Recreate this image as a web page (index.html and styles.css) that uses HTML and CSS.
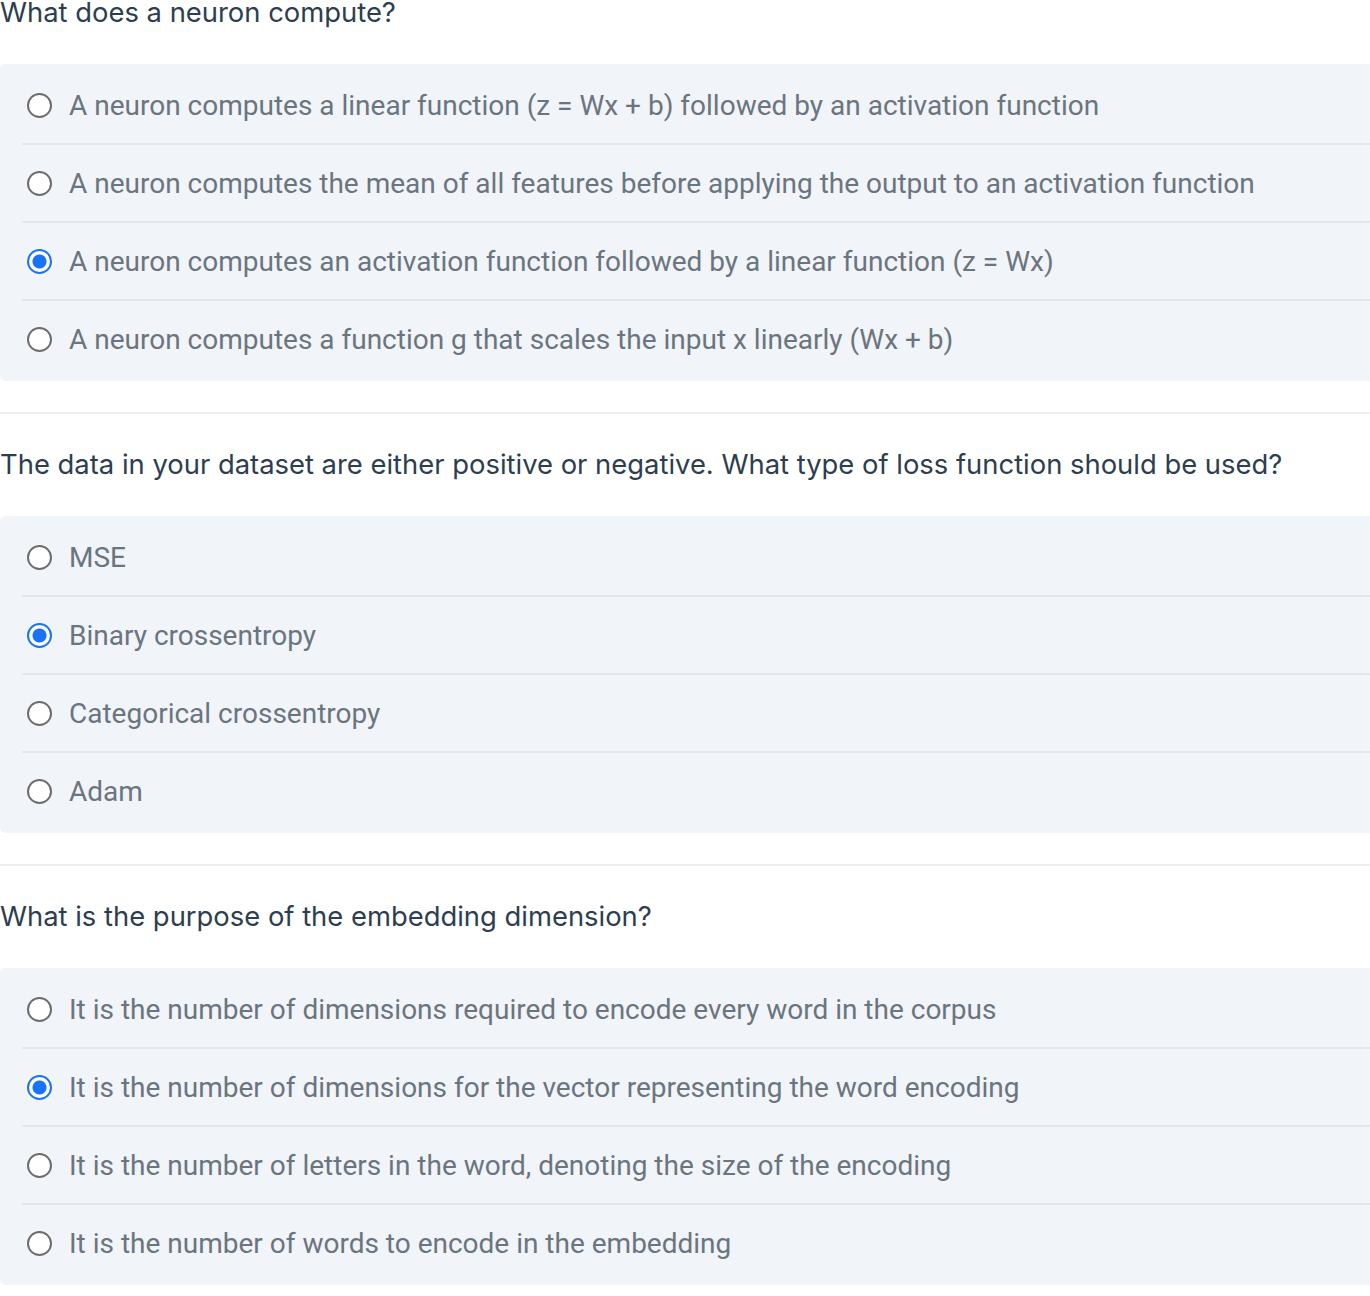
FILE: index.html
```html
<!DOCTYPE html>
<html>
<head>
<meta charset="utf-8">
<link rel="stylesheet" href="styles.css">
</head>
<body>
<div class="quiz">
  <section class="question">
    <h2 class="q-title">What does a neuron compute?</h2>
    <div class="options">
      <label class="option"><span class="radio"></span><span class="opt-text">A neuron computes a linear function (z = Wx + b) followed by an activation function</span></label>
      <label class="option"><span class="radio"></span><span class="opt-text">A neuron computes the mean of all features before applying the output to an activation function</span></label>
      <label class="option"><span class="radio checked"></span><span class="opt-text">A neuron computes an activation function followed by a linear function (z = Wx)</span></label>
      <label class="option"><span class="radio"></span><span class="opt-text">A neuron computes a function g that scales the input x linearly (Wx + b)</span></label>
    </div>
  </section>
  <hr class="sep">
  <section class="question">
    <h2 class="q-title">The data in your dataset are either positive or negative. What type of loss function should be used?</h2>
    <div class="options">
      <label class="option"><span class="radio"></span><span class="opt-text">MSE</span></label>
      <label class="option"><span class="radio checked"></span><span class="opt-text">Binary crossentropy</span></label>
      <label class="option"><span class="radio"></span><span class="opt-text">Categorical crossentropy</span></label>
      <label class="option"><span class="radio"></span><span class="opt-text">Adam</span></label>
    </div>
  </section>
  <hr class="sep">
  <section class="question">
    <h2 class="q-title">What is the purpose of the embedding dimension?</h2>
    <div class="options">
      <label class="option"><span class="radio"></span><span class="opt-text">It is the number of dimensions required to encode every word in the corpus</span></label>
      <label class="option"><span class="radio checked"></span><span class="opt-text">It is the number of dimensions for the vector representing the word encoding</span></label>
      <label class="option"><span class="radio"></span><span class="opt-text">It is the number of letters in the word, denoting the size of the encoding</span></label>
      <label class="option"><span class="radio"></span><span class="opt-text">It is the number of words to encode in the embedding</span></label>
    </div>
  </section>
</div>
</body>
</html>
```
FILE: styles.css
```css
html, body {
  margin: 0;
  padding: 0;
  background: #ffffff;
  overflow: hidden;
}
.quiz {
  width: 1400px;
  margin-top: -6px;
}
.q-title {
  margin: 0;
  padding-top: 1px;
  box-sizing: border-box;
  font-family: Inter, "Open Sans", sans-serif;
  font-weight: 400;
  font-size: 27.4px;
  line-height: 35px;
  height: 36px;
  color: #2c3e50;
  white-space: nowrap;
}
.question + .sep + .question .q-title {
  margin-top: 32px;
}
.options {
  margin-top: 34px;
  background: #f1f4f8;
  border-radius: 6px;
  padding: 3px 0 4px;
}
.option {
  display: flex;
  align-items: center;
  height: 76px;
  margin-left: 22px;
  border-top: 2px solid #e3e7eb;
}
.option:first-child {
  border-top: none;
}
.radio {
  box-sizing: border-box;
  width: 25px;
  height: 25px;
  margin-left: 5px;
  margin-right: 17px;
  border-radius: 50%;
  border: 2px solid #6d6d6d;
  background: #ffffff;
  flex: none;
}
.radio.checked {
  border-color: #1a73f5;
  background: radial-gradient(circle, #1a73f5 0 6.5px, #ffffff 7.5px);
}
.opt-text {
  font-family: Roboto, "Liberation Sans", sans-serif;
  font-size: 28px;
  color: #6b757f;
  white-space: nowrap;
}
.sep {
  margin: 31px 0 0;
  border: none;
  height: 2px;
  background: #eeeeee;
}
```
